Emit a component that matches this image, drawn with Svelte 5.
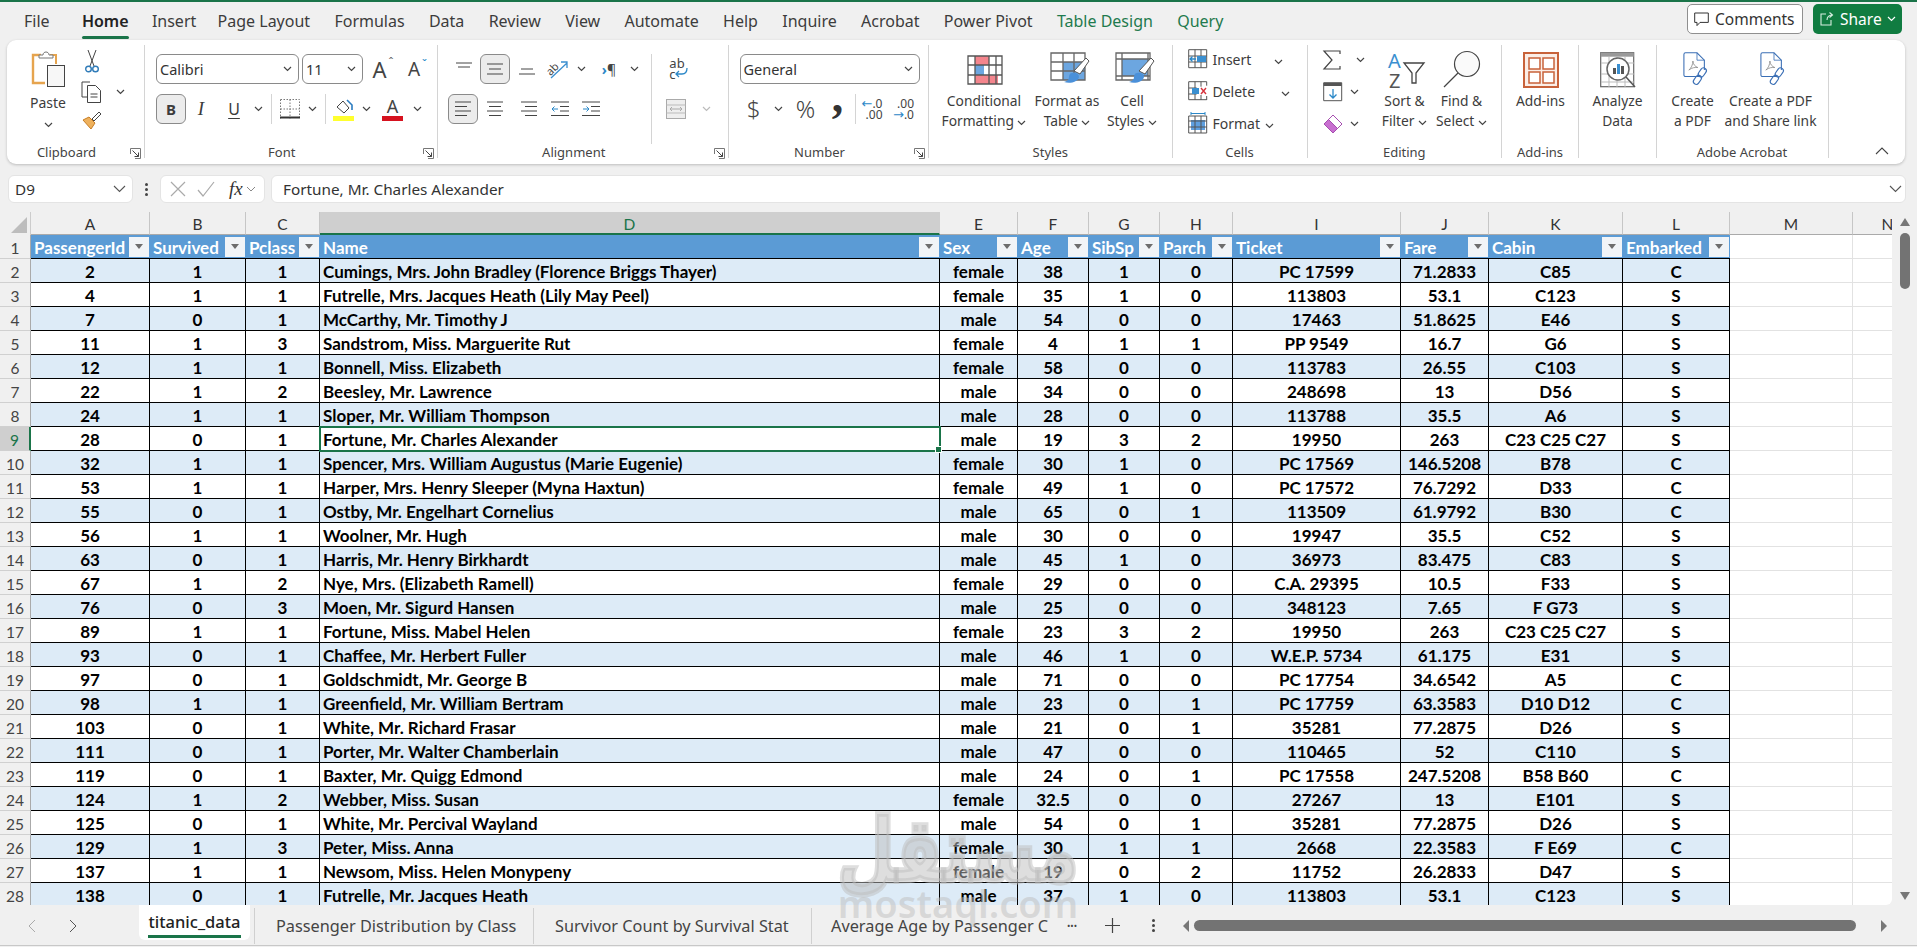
<script>
  const tabs = [
    ['File', ''], ['Home', 'active'], ['Insert', ''], ['Page Layout', ''], ['Formulas', ''], ['Data', ''], ['Review', ''], ['View', ''],
    ['Automate', ''], ['Help', ''], ['Inquire', ''], ['Acrobat', ''], ['Power Pivot', ''], ['Table Design', 'ctx'], ['Query', 'ctx']
  ];
  const letters = ['A','B','C','D','E','F','G','H','I','J','K','L','M','N'];
  const heads = ['PassengerId','Survived','Pclass','Name','Sex','Age','SibSp','Parch','Ticket','Fare','Cabin','Embarked'];
  const rows = [
    [2,1,1,'Cumings, Mrs. John Bradley (Florence Briggs Thayer)','female',38,1,0,'PC 17599','71.2833','C85','C'],
    [4,1,1,'Futrelle, Mrs. Jacques Heath (Lily May Peel)','female',35,1,0,'113803','53.1','C123','S'],
    [7,0,1,'McCarthy, Mr. Timothy J','male',54,0,0,'17463','51.8625','E46','S'],
    [11,1,3,'Sandstrom, Miss. Marguerite Rut','female',4,1,1,'PP 9549','16.7','G6','S'],
    [12,1,1,'Bonnell, Miss. Elizabeth','female',58,0,0,'113783','26.55','C103','S'],
    [22,1,2,'Beesley, Mr. Lawrence','male',34,0,0,'248698','13','D56','S'],
    [24,1,1,'Sloper, Mr. William Thompson','male',28,0,0,'113788','35.5','A6','S'],
    [28,0,1,'Fortune, Mr. Charles Alexander','male',19,3,2,'19950','263','C23 C25 C27','S'],
    [32,1,1,'Spencer, Mrs. William Augustus (Marie Eugenie)','female',30,1,0,'PC 17569','146.5208','B78','C'],
    [53,1,1,'Harper, Mrs. Henry Sleeper (Myna Haxtun)','female',49,1,0,'PC 17572','76.7292','D33','C'],
    [55,0,1,'Ostby, Mr. Engelhart Cornelius','male',65,0,1,'113509','61.9792','B30','C'],
    [56,1,1,'Woolner, Mr. Hugh','male',30,0,0,'19947','35.5','C52','S'],
    [63,0,1,'Harris, Mr. Henry Birkhardt','male',45,1,0,'36973','83.475','C83','S'],
    [67,1,2,'Nye, Mrs. (Elizabeth Ramell)','female',29,0,0,'C.A. 29395','10.5','F33','S'],
    [76,0,3,'Moen, Mr. Sigurd Hansen','male',25,0,0,'348123','7.65','F G73','S'],
    [89,1,1,'Fortune, Miss. Mabel Helen','female',23,3,2,'19950','263','C23 C25 C27','S'],
    [93,0,1,'Chaffee, Mr. Herbert Fuller','male',46,1,0,'W.E.P. 5734','61.175','E31','S'],
    [97,0,1,'Goldschmidt, Mr. George B','male',71,0,0,'PC 17754','34.6542','A5','C'],
    [98,1,1,'Greenfield, Mr. William Bertram','male',23,0,1,'PC 17759','63.3583','D10 D12','C'],
    [103,0,1,'White, Mr. Richard Frasar','male',21,0,1,'35281','77.2875','D26','S'],
    [111,0,1,'Porter, Mr. Walter Chamberlain','male',47,0,0,'110465','52','C110','S'],
    [119,0,1,'Baxter, Mr. Quigg Edmond','male',24,0,1,'PC 17558','247.5208','B58 B60','C'],
    [124,1,2,'Webber, Miss. Susan','female','32.5',0,0,'27267','13','E101','S'],
    [125,0,1,'White, Mr. Percival Wayland','male',54,0,1,'35281','77.2875','D26','S'],
    [129,1,3,'Peter, Miss. Anna','female',30,1,1,'2668','22.3583','F E69','C'],
    [137,1,1,'Newsom, Miss. Helen Monypeny','female',19,0,2,'11752','26.2833','D47','S'],
    [138,0,1,'Futrelle, Mr. Jacques Heath','male',37,1,0,'113803','53.1','C123','S']
  ];
</script>

{#snippet chev()}
  <svg class="chev" width="9" height="6" viewBox="0 0 9 6"><path d="M1 1l3.5 3.5L8 1" fill="none" stroke="#444" stroke-width="1.2"/></svg>
{/snippet}

{#snippet chevW()}
  <svg width="9" height="6" viewBox="0 0 9 6"><path d="M1 1l3.500 3.500L8 1" fill="none" stroke="#fff" stroke-width="1.2"/></svg>
{/snippet}

{#snippet launcher()}
  <svg class="launcher" width="11" height="11" viewBox="0 0 11 11"><path d="M.5 6V.5H10.5V10.5H5" fill="none" stroke="#777"/><path d="M2.5 2.5l6 6M8.5 4.5v4h-4" fill="none" stroke="#444"/></svg>
{/snippet}

{#snippet filter()}
  <span class="fbtn"><svg width="8" height="5" viewBox="0 0 8 5"><path d="M0 0h8L4 5z" fill="#6d6d6d"/></svg></span>
{/snippet}

{#snippet acro()}
  <svg width="30" height="36" viewBox="0 0 36 44"><path d="M22 30H4a2 2 0 0 1-2-2V3a2 2 0 0 1 2-2h14l9 9v12" fill="none" stroke="#3b6fb5" stroke-width="1.3"/><path d="M18 1v9h9" fill="none" stroke="#3b6fb5" stroke-width="1"/><path d="M8 22c3-2 5-7 5-11 0 4 3 7 6 8-3-.5-7 0-11 3z" fill="none" stroke="#8a8a8a"/><g fill="none" stroke="#3b6fb5" stroke-width="1.4"><rect x="21" y="19" width="7" height="12" rx="3.5" transform="rotate(35 24.5 25)"/><rect x="15" y="28" width="7" height="12" rx="3.5" transform="rotate(35 18.5 34)"/></g></svg>
{/snippet}

{#snippet brush()}
  <g><path d="M36 6l3 3-9 13-6-3z" fill="#fff" stroke="#555"/><path d="M22 21c4-1 7 1 7 4-1 5-9 7-15 5 3-1 5-2 5-5 0-2 1-4 3-4z" fill="#4a90d9"/></g>
{/snippet}

<div class="app">
  <header class="menubar">
    <nav class="menu">
      {#each tabs as [t, c]}<span class="mtab {c}">{t}</span>{/each}
    </nav>
    <div class="actions">
      <button class="comments"><svg width="15" height="15" viewBox="0 0 15 15"><path d="M.7 1h13.6v9.4H6L3 13.6v-3.2H.7z" fill="none" stroke="#333"/></svg>Comments</button>
      <button class="share"><svg width="16" height="16" viewBox="0 0 16 16"><path d="M7 3H2v11h10V9M8 9c0-3 2-5 5-5M10.500 1.500L13.500 4 10.500 6.500" fill="none" stroke="#d7eee1" stroke-width="1.1"/></svg>Share{@render chevW()}</button>
    </div>
  </header>

  <section class="ribbon">
    <div class="group g-clip">
      <div class="body clip">
        <div class="paste">
          <svg width="36" height="38" viewBox="0 0 36 38"><path d="M11 5H3v28h12" fill="#fff" stroke="#e6a44e" stroke-width="2.4"/><path d="M20 5h6v9" fill="none" stroke="#e6a44e" stroke-width="2"/><path d="M9 8V5h4c0-4 6-4 6 0h4v3z" fill="#fff" stroke="#777"/><rect x="17.500" y="15.500" width="17" height="21" fill="#f7f7f7" stroke="#444"/></svg>
          <span>Paste</span>
          {@render chev()}
        </div>
        <div class="clip-tools">
          <svg width="14" height="23" viewBox="0 0 14 23"><path d="M3 0l6 16M11 0L5 16" stroke="#444" fill="none"/><circle cx="3.500" cy="19" r="2.800" fill="none" stroke="#2f7bb8" stroke-width="1.400"/><circle cx="10.500" cy="19" r="2.800" fill="none" stroke="#2f7bb8" stroke-width="1.400"/></svg>
          <div class="copy"><svg width="21" height="22" viewBox="0 0 21 22"><path d="M9 1H1v15h5" fill="none" stroke="#444"/><path d="M6.500 4.500h8l5 5v12h-13z" fill="#fff" stroke="#444"/><path d="M9.500 13h7M9.500 16h7" stroke="#444"/></svg>{@render chev()}</div>
          <svg width="21" height="20" viewBox="0 0 21 20"><path d="M2 9l8 9 4-6-6-6z" fill="#eeb15d" stroke="#c77d24"/><path d="M11 8l7-7 2 2-7 7z" fill="#fff" stroke="#444"/></svg>
        </div>
      </div>
      <div class="label pad">Clipboard</div>
      {@render launcher()}
    </div>

    <div class="group g-font">
      <div class="body stack">
        <div class="grow font-r1">
          <div class="select"><span>Calibri</span>{@render chev()}</div>
          <i></i>
          <div class="select"><span>11</span>{@render chev()}</div>
          <span class="bigA">A<sup>ˆ</sup></span>
          <span class="bigA small">A<sup class="bl">ˇ</sup></span>
        </div>
        <div class="grow font-r2">
          <span class="tbtn on bold">B</span>
          <span class="tch ital">I</span>
          <span class="tch und">U</span>
          {@render chev()}
          <b class="vs"></b>
          <svg width="20" height="20" viewBox="0 0 20 20"><path d="M.5.500h19v19M.5.500v19M10 .5v19M.5 10h19" fill="none" stroke="#777" stroke-dasharray="1.500 1.500"/><path d="M0 18.500h20" stroke="#333" stroke-width="2"/></svg>
          {@render chev()}
          <b class="vs"></b>
          <svg width="21" height="25" viewBox="0 0 21 25"><path d="M4 10l6-6 6 7-5 5z" fill="#fff" stroke="#444"/><path d="M14 3l5 5v5" fill="none" stroke="#2b7cc0" stroke-width="1.600"/><rect y="19" width="21" height="5" fill="#ffff2e"/></svg>
          {@render chev()}
          <svg width="21" height="25" viewBox="0 0 21 25"><text x="10.500" y="16" font-size="18" text-anchor="middle" fill="#444" font-family="Noto Sans">A</text><rect y="19" width="21" height="5" fill="#d6121f"/></svg>
          {@render chev()}
        </div>
      </div>
      <div class="label pad">Font</div>
      {@render launcher()}
    </div>

    <div class="group g-align">
      <div class="body al">
        <div class="stack al-left">
          <div class="grow al-r1">
            <svg width="18" height="14" viewBox="0 0 18 14"><path d="M1 1h16M3 5h12" stroke="#444"/></svg>
            <span class="tbtn on"><svg width="18" height="12" viewBox="0 0 18 12"><path d="M1 1h16M3 6h12M1 11h16" stroke="#444"/></svg></span>
            <svg width="18" height="14" viewBox="0 0 18 14"><path d="M3 7h12M1 12h16" stroke="#444"/></svg>
            <svg width="24" height="22" viewBox="0 0 24 22"><text x="1" y="14" font-size="11" fill="#444" transform="rotate(-45 8 12)" font-family="Noto Sans">ab</text><path d="M5 20L21 5M15 4h6v6" fill="none" stroke="#3a8fd0" stroke-width="1.300"/></svg>
            {@render chev()}
            <span class="para"><em>›</em>¶</span>
            {@render chev()}
          </div>
          <div class="grow al-r2">
            <span class="tbtn on"><svg width="18" height="16" viewBox="0 0 18 16"><path d="M1 1h16M1 5.500h12M1 10h16M1 14.500h12" stroke="#444"/></svg></span>
            <svg width="18" height="16" viewBox="0 0 18 16"><path d="M1 1h16M3 5.500h12M1 10h16M3 14.500h12" stroke="#444"/></svg>
            <svg width="18" height="16" viewBox="0 0 18 16"><path d="M1 1h16M5 5.500h12M1 10h16M5 14.500h12" stroke="#444"/></svg>
            <svg width="18" height="16" viewBox="0 0 18 16"><path d="M0 1h18M9 5.500h9M9 10h9M0 14.500h18" stroke="#444"/><path d="M7 8H1M3.500 5.500L1 8l2.500 2.500" fill="none" stroke="#2b88c8"/></svg>
            <svg width="18" height="16" viewBox="0 0 18 16"><path d="M0 1h18M9 5.500h9M9 10h9M0 14.500h18" stroke="#444"/><path d="M1 8h6M4.500 5.500L7 8l-2.500 2.500" fill="none" stroke="#2b88c8"/></svg>
          </div>
        </div>
        <div class="stack al-right">
          <div class="grow wrapc"><span class="abc">ab<br/>c</span><svg class="wraparrow" width="14" height="10" viewBox="0 0 14 10"><path d="M13 0c0 5-2 6-5 6H2M5 3L2 6l3 3" fill="none" stroke="#2b88c8" stroke-width="1.300"/></svg></div>
          <div class="grow merge">
            <svg width="20" height="20" viewBox="0 0 20 20"><rect x=".5" y=".5" width="19" height="19" fill="#eee" stroke="#aaa"/><path d="M.5 6h19M.5 14h19" stroke="#bbb"/><path d="M4 10h12M6 8l-2 2 2 2M14 8l2 2-2 2" fill="none" stroke="#aaa"/></svg>
            <svg width="9" height="6" viewBox="0 0 9 6"><path d="M1 1l3.500 3.500L8 1" fill="none" stroke="#bbb" stroke-width="1.200"/></svg>
          </div>
        </div>
      </div>
      <div class="label pad">Alignment</div>
      {@render launcher()}
    </div>

    <div class="group g-num">
      <div class="body stack">
        <div class="grow num-r1"><div class="select"><span>General</span>{@render chev()}</div></div>
        <div class="grow num-r2">
          <span class="sym">$</span>
          {@render chev()}
          <span class="sym">%</span>
          <span class="sym comma">,</span>
          <b class="vs"></b>
          <span class="dec"><em>←</em>.0<br/>.00</span>
          <span class="dec">.00<br/><em>→</em>.0</span>
        </div>
      </div>
      <div class="label pad">Number</div>
      {@render launcher()}
    </div>

    <div class="group g-styles">
      <div class="body bigs">
        <div class="big b-cf">
          <span class="bicon"><svg width="36" height="30" viewBox="0 0 36 30"><rect x="8" y="1" width="14" height="9" fill="#f4858d"/><rect x="8" y="10" width="9" height="10" fill="#6ca6e0"/><rect x="8" y="20" width="23" height="9" fill="#f4858d"/><path d="M1 1h34v28H1zM1 10h34M1 20h34M8 1v28M22 1v28M29 1v28" fill="none" stroke="#555" stroke-width="1.300"/></svg></span>
          <span class="btxt">Conditional<br/>Formatting {@render chev()}</span>
        </div>
        <div class="big b-ft">
          <span class="bicon"><svg width="42" height="36" viewBox="0 0 42 36"><rect x="13" y="10" width="22" height="18" fill="#6ca6e0"/><path d="M1 1h34v27H1zM1 10h34M1 19h34M13 1v27M24 1v27" fill="none" stroke="#666" stroke-width="1.300"/>{@render brush()}</svg></span>
          <span class="btxt">Format as<br/>Table {@render chev()}</span>
        </div>
        <div class="big b-cs">
          <span class="bicon"><svg width="42" height="36" viewBox="0 0 42 36"><rect x="7" y="7" width="26" height="17" fill="#6ca6e0"/><path d="M1 1h34v27H1zM1 7h34M7 1v27M33 1v27M1 24h34" fill="none" stroke="#666" stroke-width="1.300"/>{@render brush()}</svg></span>
          <span class="btxt">Cell<br/>Styles {@render chev()}</span>
        </div>
      </div>
      <div class="label">Styles</div>
    </div>

    <div class="group g-cells">
      <div class="body smalls">
        <div class="srow"><svg width="20" height="20" viewBox="0 0 20 20"><path d="M.7.700h18v18H.7zM.7 7h18M.7 13h18M7 .7v18M13 .7v18" fill="none" stroke="#555"/><rect x="9" y="7" width="9" height="6" fill="#3a8fd0"/><path d="M8 10H2M4.500 7.500L2 10l2.500 2.500" fill="none" stroke="#2b88c8" stroke-width="1.300"/></svg><span>Insert</span><span class="c1">{@render chev()}</span></div>
        <div class="srow"><svg width="20" height="20" viewBox="0 0 20 20"><path d="M.7.700h18M.7 18.700h18M.7 7h8M.7 13h8M7 .7v18M13 .7v5M13 14v5M.7.700v18M18.700.700v4M18.700 15v4" fill="none" stroke="#555"/><rect x="4" y="7" width="7" height="6" fill="#3a8fd0"/><path d="M13 7l5 6M18 7l-5 6" stroke="#d6323c" stroke-width="1.400"/></svg><span>Delete</span><span class="c2">{@render chev()}</span></div>
        <div class="srow"><svg width="20" height="22" viewBox="0 0 20 22"><rect x="3" y="8" width="14" height="10" fill="#5fa0e0"/><path d="M.7 4h18v17H.7zM.7 9h18M.7 15h18M7 4v17M13 4v17" fill="none" stroke="#555"/><path d="M3 1.500h14M3 0v3M17 0v3" stroke="#2b88c8"/></svg><span>Format</span><span class="c3">{@render chev()}</span></div>
      </div>
      <div class="label">Cells</div>
    </div>

    <div class="group g-edit">
      <div class="body edit">
        <div class="edit-small">
          <div class="erow e1"><svg width="18" height="20" viewBox="0 0 18 20"><path d="M17 4V1H1l8 9-8 9h16v-3" fill="none" stroke="#444" stroke-width="1.200"/></svg>{@render chev()}</div>
          <div class="erow e2"><svg width="20" height="20" viewBox="0 0 20 20"><path d="M.7.700h18v18H.7z" fill="#fff" stroke="#555"/><path d="M.7 2.500h18" stroke="#555" stroke-width="3"/><path d="M10 7v9M6.500 12.500L10 16l3.500-3.500" fill="none" stroke="#2b88c8" stroke-width="1.300"/></svg>{@render chev()}</div>
          <div class="erow e2"><svg width="20" height="20" viewBox="0 0 20 20"><path d="M10 1l9 9-9 9-9-9z" fill="#fff" stroke="#a64db0"/><path d="M5.500 5.500L14.500 14.500 10 19 1 10z" fill="#c86fd0" stroke="#a64db0"/></svg>{@render chev()}</div>
        </div>
        <div class="big b-sort">
          <span class="bicon"><svg width="38" height="38" viewBox="0 0 38 38"><text x="1" y="17" font-size="20" fill="#3a8fd0" font-family="Noto Sans">A</text><text x="2" y="37" font-size="20" fill="#555" font-family="Noto Sans">Z</text><path d="M17 12h20l-8 10v10h-4V22z" fill="none" stroke="#444" stroke-width="1.300"/></svg></span>
          <span class="btxt">Sort &amp;<br/>Filter {@render chev()}</span>
        </div>
        <div class="big b-find">
          <span class="bicon"><svg width="38" height="38" viewBox="0 0 38 38"><circle cx="24" cy="13" r="12.500" fill="#fafafa" stroke="#444" stroke-width="1.200"/><path d="M15 22L1 36" stroke="#444" stroke-width="1.200"/></svg></span>
          <span class="btxt">Find &amp;<br/>Select {@render chev()}</span>
        </div>
      </div>
      <div class="label">Editing</div>
    </div>

    <div class="group g-add">
      <div class="body bigs">
        <div class="big b-add">
          <span class="bicon"><svg width="36" height="36" viewBox="0 0 36 36"><rect x="1" y="1" width="34" height="34" fill="#fbeee7" stroke="#c8623a" stroke-width="2"/><g fill="#fff" stroke="#c8623a" stroke-width="1.500"><rect x="6" y="6" width="11" height="11"/><rect x="20" y="6" width="11" height="11"/><rect x="6" y="20" width="11" height="11"/><rect x="20" y="20" width="11" height="11"/></g></svg></span>
          <span class="btxt">Add-ins</span>
        </div>
      </div>
      <div class="label">Add-ins</div>
    </div>

    <div class="group g-an">
      <div class="body bigs">
        <div class="big b-an">
          <span class="bicon"><svg width="36" height="36" viewBox="0 0 36 36"><rect x=".7" y=".7" width="33" height="34" fill="#fff" stroke="#666" stroke-width="1.200"/><rect x=".7" y=".7" width="33" height="4" fill="#9a9a9a"/><path d="M1 11h33M1 22h33M1 30h33M9 5v30M17 5v30M25 5v30" stroke="#bbb"/><circle cx="18" cy="17" r="11" fill="#fff" stroke="#666" stroke-width="1.500"/><rect x="13" y="16" width="3" height="6" fill="#555"/><rect x="17" y="12" width="3" height="10" fill="#3a8fd0"/><rect x="21" y="14" width="3" height="8" fill="#555"/><path d="M26 25l9 10" stroke="#555" stroke-width="1.500"/></svg></span>
          <span class="btxt">Analyze<br/>Data</span>
        </div>
      </div>
      <div class="label blank">&nbsp;</div>
    </div>

    <div class="group g-acro">
      <div class="body bigs">
        <div class="big b-a1"><span class="bicon">{@render acro()}</span><span class="btxt">Create<br/>a PDF</span></div>
        <div class="big b-a2"><span class="bicon">{@render acro()}</span><span class="btxt">Create a PDF<br/>and Share link</span></div>
      </div>
      <div class="label">Adobe Acrobat</div>
    </div>

    <svg class="collapse" width="14" height="8" viewBox="0 0 14 8"><path d="M1 7l6-6 6 6" fill="none" stroke="#444" stroke-width="1.100"/></svg>
  </section>

  <section class="fbar">
    <div class="fbox namebox"><span>D9</span><svg width="13" height="8" viewBox="0 0 13 8"><path d="M1 1l5.500 5.500L12 1" fill="none" stroke="#555" stroke-width="1.100"/></svg></div>
    <span class="dots"><i></i><i></i><i></i></span>
    <div class="fbox fxbox">
      <svg width="18" height="18" viewBox="0 0 18 18"><path d="M2 2l14 14M16 2L2 16" stroke="#aaa" stroke-width="1.200"/></svg>
      <svg width="18" height="18" viewBox="0 0 18 18"><path d="M1 10l5 6L17 2" fill="none" stroke="#aaa" stroke-width="1.200"/></svg>
      <span class="fx">fx</span>
      <svg width="10" height="6" viewBox="0 0 10 6"><path d="M1 1l4 4 4-4" fill="none" stroke="#888"/></svg>
    </div>
    <div class="fbox formula"><span>Fortune, Mr. Charles Alexander</span><svg width="13" height="8" viewBox="0 0 13 8"><path d="M1 1l5.500 5.500L12 1" fill="none" stroke="#555" stroke-width="1.100"/></svg></div>
  </section>

  <section class="sheetwrap">
    <div class="sheet">
      <div class="corner"><svg width="16" height="16" viewBox="0 0 16 16"><path d="M16 0v16H0z" fill="#bdbdbd"/></svg></div>
      {#each letters as l}<div class="colh" class:sel={l === 'D'}>{l}</div>{/each}

      <div class="rowh">1</div>
      {#each heads as h}<div class="hd"><span>{h}</span>{@render filter()}</div>{/each}
      <div class="gl"></div><div class="gl"></div>

      {#each rows as r, i}
        <div class="rowh" class:sel={i === 7}>{i + 2}</div>
        {#each r as v, c}
          <div class="cell" class:odd={i % 2 === 0} class:left={c === 3} class:active={i === 7 && c === 3}>{v}{#if i === 7 && c === 3}<b class="handle"></b>{/if}</div>
        {/each}
        <div class="gl"></div><div class="gl"></div>
      {/each}
    </div>
    <aside class="vscroll">
      <svg width="10" height="8" viewBox="0 0 10 8"><path d="M5 0l5 8H0z" fill="#777"/></svg>
      <div class="vthumb"></div>
      <svg class="vdown" width="10" height="8" viewBox="0 0 10 8"><path d="M0 0h10L5 8z" fill="#777"/></svg>
    </aside>
  </section>

  <footer class="tabsbar">
    <svg class="nav n1" width="8" height="14" viewBox="0 0 8 14"><path d="M7 1L1 7l6 6" fill="none" stroke="#aaa"/></svg>
    <svg class="nav n2" width="8" height="14" viewBox="0 0 8 14"><path d="M1 1l6 6-6 6" fill="none" stroke="#555"/></svg>
    <div class="stab on"><span>titanic_data</span></div>
    <div class="stab t2">Passenger Distribution by Class</div>
    <div class="stab t3">Survivor Count by Survival Stat</div>
    <div class="stab t4">Average Age by Passenger C</div>
    <span class="more">•••</span>
    <svg class="plus" width="15" height="15" viewBox="0 0 15 15"><path d="M7.500 0v15M0 7.500h15" stroke="#444" stroke-width="1.200"/></svg>
    <span class="dots d2"><i></i><i></i><i></i></span>
    <svg class="harrow" width="6" height="12" viewBox="0 0 6 12"><path d="M6 0v12L0 6z" fill="#777"/></svg>
    <div class="hthumb"></div>
    <svg class="harrow r" width="6" height="12" viewBox="0 0 6 12"><path d="M0 0v12l6-6z" fill="#777"/></svg>
  </footer>

  <div class="watermark" aria-hidden="true">
    <span class="wm-ar" dir="rtl" lang="ar">مستقل</span>
    <span class="wm-en">mostaql.com</span>
  </div>
</div>

<style>
  :global(body) { margin: 0; background: #f0f0f0; }
  svg { overflow: visible; flex: none; }
  .app { position: relative; width: 1917px; height: 947px; overflow: hidden; background: #f0f0f0; font-family: "Noto Sans", "Open Sans", sans-serif; color: #333; border-top: 2px solid #1a7449; box-sizing: border-box; }

  .menubar { display: flex; align-items: center; height: 38px; padding: 0 15px 0 24px; }
  .menu { display: flex; gap: 24.300px; font-size: 16px; }
  .mtab { position: relative; color: #3c3c3c; line-height: 38px; }
  .mtab:nth-child(1) { margin-right: 8px; }
  .mtab:nth-child(2) { margin-right: -1px; }
  .mtab:nth-child(3) { margin-right: -3px; }
  .mtab.active { font-weight: 600; color: #222; }
  .mtab.active::after { content: ""; position: absolute; left: 0; right: 0; bottom: 1px; height: 3px; border-radius: 2px; background: #1a7449; }
  .mtab.ctx { color: #1f7a4d; }
  .actions { display: flex; gap: 10px; margin-left: auto; margin-top: -4px; }
  .comments, .share { display: flex; align-items: center; height: 30px; box-sizing: border-box; border-radius: 5px; font: 15.500px "Noto Sans", sans-serif; padding: 0; }
  .comments { width: 116px; gap: 6px; padding-left: 6px; background: #fff; color: #333; border: 1px solid #8f8f8f; }
  .share { width: 89px; gap: 5px; padding-left: 6px; background: #107c41; color: #fff; border: 0; }

  .ribbon { position: relative; display: flex; box-sizing: border-box; height: 124px; margin: 0 12px 0 7px; padding-top: 5px; background: #fff; border-radius: 9px; box-shadow: 0 1px 3px rgba(0,0,0,.22); font-size: 13.800px; color: #3c3c3c; }
  .group { position: relative; display: flex; flex-direction: column; flex: none; height: 113px; box-sizing: border-box; border-right: 1px solid #d4d4d4; }
  .g-clip { width: 138px; }
  .g-font { width: 292.500px; }
  .g-align { width: 291.500px; }
  .g-num { width: 200px; }
  .g-styles { width: 243.500px; }
  .g-cells { width: 135px; }
  .g-edit { width: 194.500px; }
  .g-add { width: 77px; }
  .g-an { width: 77.500px; }
  .g-acro { width: 172px; }
  .body { flex: 1; min-height: 0; box-sizing: border-box; padding-top: 9px; }
  .label { height: 16px; margin-bottom: -2px; line-height: 16px; text-align: center; font-size: 13px; color: #444; }
  .label.pad { padding-right: 18px; }
  .launcher { position: absolute; right: 3px; bottom: -1px; }
  .stack { display: flex; flex-direction: column; gap: 10px; }
  .grow { display: grid; align-items: center; justify-items: center; height: 30px; }

  .clip { display: flex; padding-top: 5px; }
  .paste { display: flex; flex-direction: column; align-items: center; width: 82px; margin-right: -8px; }
  .paste span { margin-top: 5px; line-height: 20px; font-size: 14px; }
  .paste .chev { margin-top: 9px; }
  .clip-tools { display: flex; flex-direction: column; align-items: flex-start; gap: 8px; }
  .clip-tools > svg:first-child { margin-left: 4px; }
  .copy { display: flex; align-items: center; gap: 14px; }

  .g-font .body { padding-left: 11px; }
  .font-r1 { grid-template-columns: 143px 3px 61px 33px 36px; }
  .font-r2 { grid-template-columns: 30px 30px 36px 12px 14px 24px 20px 6px 30px 16px 37px 12px; }
  .select { display: flex; align-items: center; justify-content: space-between; box-sizing: border-box; width: 100%; height: 30px; padding: 0 6px 0 3px; background: #fff; border: 1px solid #8a8a8a; border-radius: 6px; font-size: 14.500px; color: #333; }
  .num-r1 { grid-template-columns: 180px; }
  .bigA { position: relative; font-size: 22px; line-height: 1; color: #444; }
  .bigA.small { font-size: 19px; }
  .bigA sup { position: absolute; top: -1px; right: -7px; font-size: 12px; line-height: 1; color: #666; }
  .bigA sup.bl { color: #2b88c8; }
  .tbtn { display: flex; align-items: center; justify-content: center; box-sizing: border-box; width: 30px; height: 30px; }
  .tbtn.on { background: #ececec; border: 1px solid #8a8a8a; border-radius: 6px; }
  .tbtn.bold { font-weight: 700; font-size: 15px; }
  .tch { font-size: 16px; }
  .ital { font-family: "Liberation Serif", serif; font-style: italic; font-size: 19px; }
  .und { text-decoration: underline; text-underline-offset: 3px; }
  .vs { display: block; width: 1px; height: 30px; background: #d4d4d4; }

  .al { display: flex; padding-left: 10.500px; }
  .al-left { width: 204px; box-sizing: border-box; border-right: 1px solid #d4d4d4; height: 90px; }
  .al-r1 { grid-template-columns: 32px 30px 34px 28px 18px 38px 12px; }
  .al-r2 { grid-template-columns: 30px 34px 34px 27px 36px; }
  .para { font-size: 14px; color: #444; }
  .para em { font-style: normal; color: #2b88c8; font-weight: 700; }
  .al-right { width: 70px; }
  .wrapc { position: relative; grid-template-columns: 50px; }
  .abc { font-size: 13px; line-height: 11px; color: #444; }
  .wraparrow { position: absolute; left: 22px; top: 14px; }
  .merge { grid-template-columns: 46px 14px; padding-left: 1px; }

  .g-num .body { padding-left: 10.500px; }
  .num-r2 { grid-template-columns: 28px 22px 32px 32px 3px 31px 32px; }
  .sym { font-size: 24px; font-weight: 300; line-height: 1; color: #444; }
  .comma { font-family: "Liberation Serif", serif; font-weight: 700; font-size: 46px; margin-top: -24px; color: #333; }
  .dec { font-size: 12px; line-height: 11px; text-align: right; color: #444; }
  .dec em { font-family: "DejaVu Sans", sans-serif; font-style: normal; color: #2b88c8; font-size: 13px; }

  .bigs { display: flex; padding-top: 3px; }
  .big { display: flex; flex-direction: column; align-items: center; flex: none; }
  .bicon { display: flex; align-items: center; justify-content: center; height: 43px; }
  .btxt { text-align: center; line-height: 20px; white-space: nowrap; }
  .g-styles .bigs { padding-left: 7px; }
  .b-cf { width: 96px; }
  .b-ft { width: 70px; }
  .b-cs { width: 60px; }
  .b-cf .bicon { padding-left: 2px; }
  .b-ft .bicon, .b-cs .bicon { padding-left: 7px; }

  .smalls { display: flex; flex-direction: column; gap: 10px; padding: 3px 0 0 15px; }
  .srow { display: flex; align-items: center; gap: 5px; height: 22px; font-size: 14px; }
  .c1 { margin-left: 18px; }
  .c2 { margin-left: 21px; }
  .c3 { margin-left: 0; }

  .edit { display: flex; padding-top: 3px; }
  .edit-small { display: flex; flex-direction: column; gap: 10px; width: 68px; padding: 1px 0 0 15px; box-sizing: border-box; }
  .erow { display: flex; align-items: center; height: 22px; }
  .e1 { gap: 15px; }
  .e2 { gap: 7px; }
  .b-sort { width: 58px; }
  .b-find { width: 56px; }
  .b-sort .bicon { padding-left: 2px; }
  .b-add { width: 77px; }
  .b-an { width: 77px; }
  .b-a1 { width: 72px; }
  .b-a2 { width: 84px; }
  .b-a1 .bicon { padding-left: 8px; }
  .b-a2 .bicon { padding-left: 6px; }
  .collapse { position: absolute; right: 16px; bottom: 9px; }

  .fbar { display: flex; align-items: stretch; height: 28px; margin: 11px 11px 0 8px; font-size: 15.300px; }
  .fbox { display: flex; align-items: center; box-sizing: border-box; background: #fff; border: 1px solid #e4e4e4; border-radius: 6px; }
  .namebox { width: 125px; justify-content: space-between; padding: 0 6px 0 6px; }
  .dots { display: flex; flex-direction: column; justify-content: center; gap: 2px; width: 27px; align-items: center; }
  .dots i { display: block; width: 3px; height: 3px; border-radius: 50%; background: #444; }
  .fxbox { width: 105px; gap: 10px; padding-left: 8px; }
  .fx { font-family: "Liberation Serif", serif; font-style: italic; font-size: 19px; color: #333; margin-left: 4px; margin-right: -7px; }
  .formula { width: 1635px; margin-left: 6px; justify-content: space-between; padding: 0 3px 0 11px; }

  .sheetwrap { display: flex; margin-top: 9px; height: 693px; }
  .sheet { display: grid; flex: none; width: 1892px; height: 693px; overflow: hidden; background: #fff; border-bottom-right-radius: 6px;
    grid-template-columns: 31px 119px 96px 74px 620px 78px 71px 71px 73px 168px 88px 134px 107px 123px 70px;
    grid-template-rows: 23px repeat(28, 24px);
    font-family: Lato, "Noto Sans", sans-serif; }
  .corner { display: flex; align-items: flex-end; justify-content: flex-end; padding: 0 3px 2px 0; background: #f0f0f0; border-right: 1px solid #ccc; box-sizing: border-box; }
  .colh { display: flex; align-items: center; justify-content: center; padding-top: 2px; background: #f0f0f0; font-size: 15.500px; color: #333; border-right: 1px solid #c6c6c6; border-bottom: 1px solid #aaa; box-sizing: border-box; }
  .colh.sel { background: #cfcfcf; color: #1a7449; border-bottom: 2px solid #1a7449; border-right-color: #cfcfcf; }
  .rowh { display: flex; align-items: center; justify-content: center; padding-top: 2px; background: #f0f0f0; font-size: 15.500px; color: #444; border-right: 1px solid #aaa; border-bottom: 1px solid #d0d0d0; box-sizing: border-box; }
  .rowh.sel { background: #cfcfcf; color: #1a7449; border-right: 2px solid #1a7449; }
  .hd { display: flex; align-items: center; justify-content: space-between; box-sizing: border-box; padding: 0 0 0 3px; background: #5b9bd5; color: #fff; font-weight: 700; font-size: 17px; border-bottom: 1px solid #000; white-space: nowrap; }
  .hd span:first-child { padding-top: 2px; }
  .fbtn { display: flex; align-items: center; justify-content: center; flex: none; width: 20px; height: 20px; background: #f1f4f7; margin-right: 1px; }
  .cell { display: flex; align-items: center; justify-content: center; box-sizing: border-box; padding: 2px 1px 0; font-weight: 700; font-size: 17px; color: #000; white-space: nowrap; border-right: 1px solid #000; border-bottom: 1px solid #000; background: #fff; }
  .cell.odd { background: #ddebf7; }
  .cell.left { justify-content: flex-start; padding-left: 3px; }
  .cell.active { position: relative; outline: 2px solid #1a7449; outline-offset: -1px; z-index: 1; }
  .handle { position: absolute; right: -3px; bottom: -3px; width: 5px; height: 5px; background: #1a7449; border: 1px solid #fff; }
  .gl { border-right: 1px solid #e2e2e2; border-bottom: 1px solid #e2e2e2; box-sizing: border-box; }

  .vscroll { position: relative; display: flex; flex-direction: column; align-items: center; width: 25px; padding-top: 6px; box-sizing: border-box; }
  .vthumb { width: 10px; height: 56px; margin-top: 7px; border-radius: 5px; background: #737373; }
  .vdown { position: absolute; bottom: 5px; }

  .tabsbar { position: relative; display: flex; align-items: center; box-sizing: border-box; height: 41px; padding-top: 1px; border-bottom: 1px solid #c8c8c8; font-size: 16.300px; color: #444; }
  .nav.n1 { margin-left: 28px; }
  .nav.n2 { margin-left: 33px; margin-right: 62px; }
  .stab { display: flex; align-items: center; height: 36px; box-sizing: border-box; border-right: 1px solid #d0d0d0; white-space: nowrap; overflow: hidden; }
  .stab.on { justify-content: center; width: 111px; margin-right: 4px; margin-top: -1px; background: #fff; border: 0; border-radius: 0 0 6px 6px; color: #222; font-weight: 500; align-self: flex-start; height: 35px; font-size: 16.500px; }
  .stab.on span { padding-bottom: 1px; border-bottom: 3px solid #1a7449; line-height: 24px; margin-top: 3px; }
  .t2 { width: 280px; padding-left: 21px; border-left: 1px solid #d0d0d0; }
  .t3 { width: 278px; padding-left: 21px; }
  .t4 { width: 248px; padding-left: 19px; border-right: 0; }
  .more { width: 24px; text-align: center; font-size: 9px; color: #444; }
  .plus { margin-left: 21px; }
  .dots.d2 { width: 14px; margin-left: 26px; }
  .harrow { margin-left: 23px; }
  .hthumb { width: 662px; height: 11px; margin-left: 5px; border-radius: 6px; background: #737373; }
  .harrow.r { margin-left: 25px; }

  .watermark { position: absolute; left: 838px; top: 806px; width: 240px; display: flex; flex-direction: column; align-items: center; pointer-events: none; z-index: 5; color: rgba(190,190,190,.5); }
  .wm-ar { font-family: "DejaVu Sans", sans-serif; font-weight: 700; font-size: 66px; line-height: 80px; -webkit-text-stroke: 4px rgba(190,190,190,.5); transform: translateY(4px) scaleY(1.33); }
  .wm-en { font-family: "Noto Sans", sans-serif; font-weight: 600; font-size: 38px; line-height: 40px; margin-top: -5px; }
</style>
